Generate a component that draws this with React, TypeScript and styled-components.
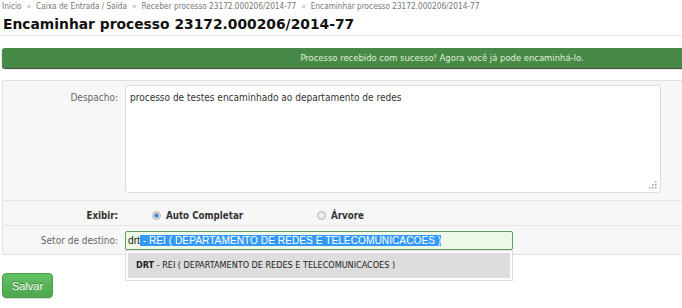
import React from 'react';
import styled, { createGlobalStyle } from 'styled-components';

const GlobalStyle = createGlobalStyle`
  html, body {
    margin: 0;
    padding: 0;
    overflow: hidden;
    background: #fff;
  }
  body {
    font-family: "DejaVu Sans Condensed", "DejaVu Sans", sans-serif;
    font-size: 10px;
    color: #333;
  }
`;

const Page = styled.div`
  width: 682px;
  height: 308px;
  position: relative;
  overflow: hidden;
`;

const Breadcrumb = styled.div`
  display: flex;
  align-items: center;
  padding-left: 2px;
  height: 12px;
  font-size: 8.2px;
  color: #777;
  white-space: nowrap;
`;

const Sep = styled.span`
  color: #aaa;
  margin: 0 5px;
`;

const Title = styled.h1`
  margin: 0;
  padding: 2px 0 0 3px;
  height: 21px;
  font-family: "DejaVu Sans", sans-serif;
  font-weight: bold;
  font-size: 13.85px;
  line-height: 20px;
  color: #111;
  border-bottom: 1px solid #e6e6e6;
  white-space: nowrap;
`;

const Alert = styled.div`
  margin: 12px 0 0 2px;
  width: 880px;
  height: 20px;
  box-sizing: border-box;
  background: #478947;
  border-radius: 3px;
  box-shadow: 0 1px 1px #3a3a3a;
  color: #e2f1da;
  font-size: 9.4px;
  line-height: 20px;
  text-align: center;
`;

const Panel = styled.div`
  margin: 12px 0 0 2px;
  width: 720px;
  background: #f7f7f7;
  border: 1px solid #e0e0e0;
  border-radius: 3px;
`;

const Row = styled.div<{ $kind: 'top' | 'mid' | 'last' }>`
  display: grid;
  grid-template-columns: 115px 1fr;
  column-gap: 7px;
  align-items: ${p => (p.$kind === 'top' ? 'start' : 'center')};
  box-sizing: border-box;
  padding: ${p => (p.$kind === 'top' ? '4px 0 7px' : p.$kind === 'mid' ? '4px 0 0' : '0')};
  height: ${p => (p.$kind === 'top' ? 'auto' : p.$kind === 'last' ? '28px' : '25px')};
  border-bottom: ${p => (p.$kind === 'last' ? 'none' : '1px solid #e6e6e6')};
`;

const Label = styled.div<{ $bold?: boolean; $top?: number }>`
  text-align: right;
  color: ${p => (p.$bold ? '#333' : '#666')};
  font-weight: ${p => (p.$bold ? 'bold' : 'normal')};
  font-size: ${p => (p.$bold ? '9.7px' : '10px')};
  padding-top: ${p => p.$top || 0}px;
`;

const TextArea = styled.div`
  position: relative;
  width: 536px;
  height: 108px;
  box-sizing: border-box;
  background: #fff;
  border: 1px solid #dcdcdc;
  border-radius: 3px;
  padding: 6px 4px;
  color: #333;
`;

const Grip = styled.svg`
  position: absolute;
  right: 3px;
  bottom: 3px;
`;

const Options = styled.div`
  display: flex;
`;

const Option = styled.label`
  display: flex;
  align-items: center;
  width: 165px;
  padding-left: 27px;
  box-sizing: border-box;
  font-weight: bold;
  font-size: 9.7px;
  color: #333;
`;

const Radio = styled.span<{ $checked?: boolean }>`
  width: 9px;
  height: 9px;
  border-radius: 50%;
  margin-right: 5px;
  box-sizing: border-box;
  border: 1px solid #b5b5b5;
  background: ${p =>
    p.$checked
      ? 'radial-gradient(circle, #2f7fc8 0, #3b8bd4 1.6px, #dcdcdc 2.6px, #f2f2f2 100%)'
      : 'radial-gradient(circle, #f4f4f4 0, #dedede 100%)'};
`;

const Field = styled.div`
  position: relative;
  width: 388px;
  height: 19px;
  box-sizing: border-box;
  border: 1px solid #5f9d5f;
  border-radius: 2px;
  background: #eef9e8;
  font-family: "Liberation Sans", Arial, sans-serif;
  font-size: 10.2px;
  line-height: 17px;
  padding-left: 2px;
  white-space: nowrap;
  color: #222;
`;

const Selected = styled.span`
  background: #3399ff;
  color: #fff;
`;

const Menu = styled.div`
  position: absolute;
  left: -1px;
  top: 18px;
  width: 388px;
  height: 31px;
  box-sizing: border-box;
  background: #fff;
  border: 1px solid #dcdcdc;
  padding: 2px;
  z-index: 2;
`;

const MenuItem = styled.div`
  height: 25px;
  background: #dddddd;
  padding-left: 8px;
  line-height: 25px;
  font-size: 9px;
  color: #222;
  white-space: nowrap;
  font-family: "DejaVu Sans Condensed", sans-serif;
`;

const SaveButton = styled.button`
  margin: 18px 0 0 2px;
  width: 51px;
  height: 25px;
  border: 1px solid #4a9a4a;
  border-radius: 4px;
  background: linear-gradient(#63c163, #4ea64e);
  color: #fff;
  font-family: "Liberation Sans", Arial, sans-serif;
  font-size: 11px;
  text-shadow: 0 -1px 0 rgba(0, 0, 0, 0.35);
  box-shadow: 0 1px 1px rgba(0, 0, 0, 0.15);
  padding: 0;
`;

const crumbs = [
  'Início',
  'Caixa de Entrada / Saída',
  'Receber processo 23172.000206/2014-77',
  'Encaminhar processo 23172.000206/2014-77',
];

const gripDots = [
  [7, 1], [7, 4], [4, 4], [7, 7], [4, 7], [1, 7],
];

export default function App() {
  return (
    <Page>
      <GlobalStyle />
      <Breadcrumb>
        {crumbs.map((c, i) => (
          <React.Fragment key={c}>
            {i > 0 && <Sep>»</Sep>}
            <span>{c}</span>
          </React.Fragment>
        ))}
      </Breadcrumb>
      <Title>Encaminhar processo 23172.000206/2014-77</Title>

      <Alert>Processo recebido com sucesso! Agora você já pode encaminhá-lo.</Alert>

      <Panel>
        <Row $kind="top">
          <Label $top={7}>Despacho:</Label>
          <TextArea>
            processo de testes encaminhado ao departamento de redes
            <Grip width="9" height="9" viewBox="0 0 9 9">
              {gripDots.map(([x, y]) => (
                <rect key={`${x}-${y}`} x={x} y={y} width="1.6" height="1.6" fill="#a8a8a8" />
              ))}
            </Grip>
          </TextArea>
        </Row>
        <Row $kind="mid">
          <Label $bold>Exibir:</Label>
          <Options>
            <Option>
              <Radio $checked />
              Auto Completar
            </Option>
            <Option>
              <Radio />
              Árvore
            </Option>
          </Options>
        </Row>
        <Row $kind="last">
          <Label>Setor de destino:</Label>
          <Field>
            drt<Selected> - REI ( DEPARTAMENTO DE REDES E TELECOMUNICACOES )</Selected>
            <Menu>
              <MenuItem>
                <b>DRT</b> - REI ( DEPARTAMENTO DE REDES E TELECOMUNICACOES )
              </MenuItem>
            </Menu>
          </Field>
        </Row>
      </Panel>

      <SaveButton>Salvar</SaveButton>
    </Page>
  );
}
